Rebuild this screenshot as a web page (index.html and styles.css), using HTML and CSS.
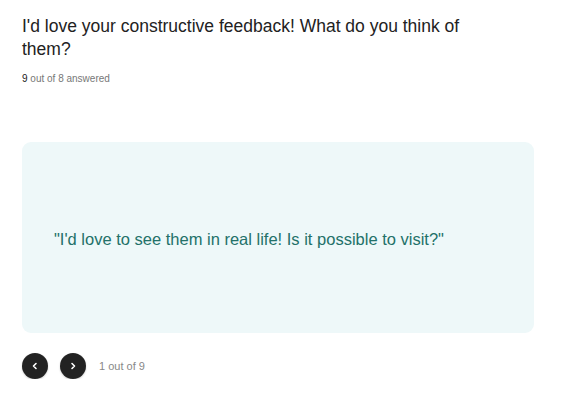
FILE: index.html
```html
<!DOCTYPE html>
<html lang="en">
<head>
<meta charset="utf-8">
<title>Feedback</title>
<link rel="stylesheet" href="styles.css">
</head>
<body>
<main class="page">
  <header class="question">
    <h1 class="question-title">I'd love your constructive feedback! What do you think of them?</h1>
    <p class="question-meta"><span class="meta-count">9</span> out of 8 answered</p>
  </header>
  <section class="answer-card">
    <p class="answer-text">"I'd love to see them in real life! Is it possible to visit?"</p>
  </section>
  <nav class="pager">
    <button class="pager-btn" aria-label="Previous">
      <svg viewBox="0 0 10 10" width="10" height="10"><path d="M6 2.5 L3.5 5 L6 7.5" fill="none" stroke="#fff" stroke-width="1.6" stroke-linecap="round" stroke-linejoin="round"/></svg>
    </button>
    <button class="pager-btn" aria-label="Next">
      <svg viewBox="0 0 10 10" width="10" height="10"><path d="M4 2.5 L6.5 5 L4 7.5" fill="none" stroke="#fff" stroke-width="1.6" stroke-linecap="round" stroke-linejoin="round"/></svg>
    </button>
    <span class="pager-label">1 out of 9</span>
  </nav>
</main>
</body>
</html>
```

FILE: styles.css
```css
* { box-sizing: border-box; }
html, body { margin: 0; padding: 0; background: #fff; }
body { font-family: "Liberation Sans", Arial, sans-serif; }
.page { padding: 15px 35px 0 22px; width: 569px; }
.question-title {
  margin: 0;
  font-size: 17.5px;
  line-height: 23px;
  font-weight: 400;
  color: #222;
  max-width: 490px;
}
.question-meta {
  margin: 12px 0 0;
  font-size: 10px;
  line-height: 12px;
  color: #777;
}
.meta-count { color: #222; }
.answer-card {
  margin-top: 57px;
  height: 191px;
  width: 512px;
  background: #eef8f9;
  border-radius: 9px;
  padding: 3px 32px 0;
  display: flex;
  align-items: center;
}
.answer-text {
  margin: 0;
  font-size: 16.5px;
  line-height: 19px;
  color: #237169;
}
.pager {
  margin-top: 20px;
  display: flex;
  align-items: center;
  gap: 12px;
}
.pager-btn {
  width: 26px;
  height: 26px;
  border-radius: 50%;
  border: none;
  padding: 0;
  background: #222;
  display: flex;
  align-items: center;
  justify-content: center;
  box-shadow: 0 1px 2px rgba(0,0,0,0.2);
}
.pager-btn svg { display: block; }
.pager-label {
  margin-left: 1px;
  font-size: 11px;
  color: #888;
}
```
